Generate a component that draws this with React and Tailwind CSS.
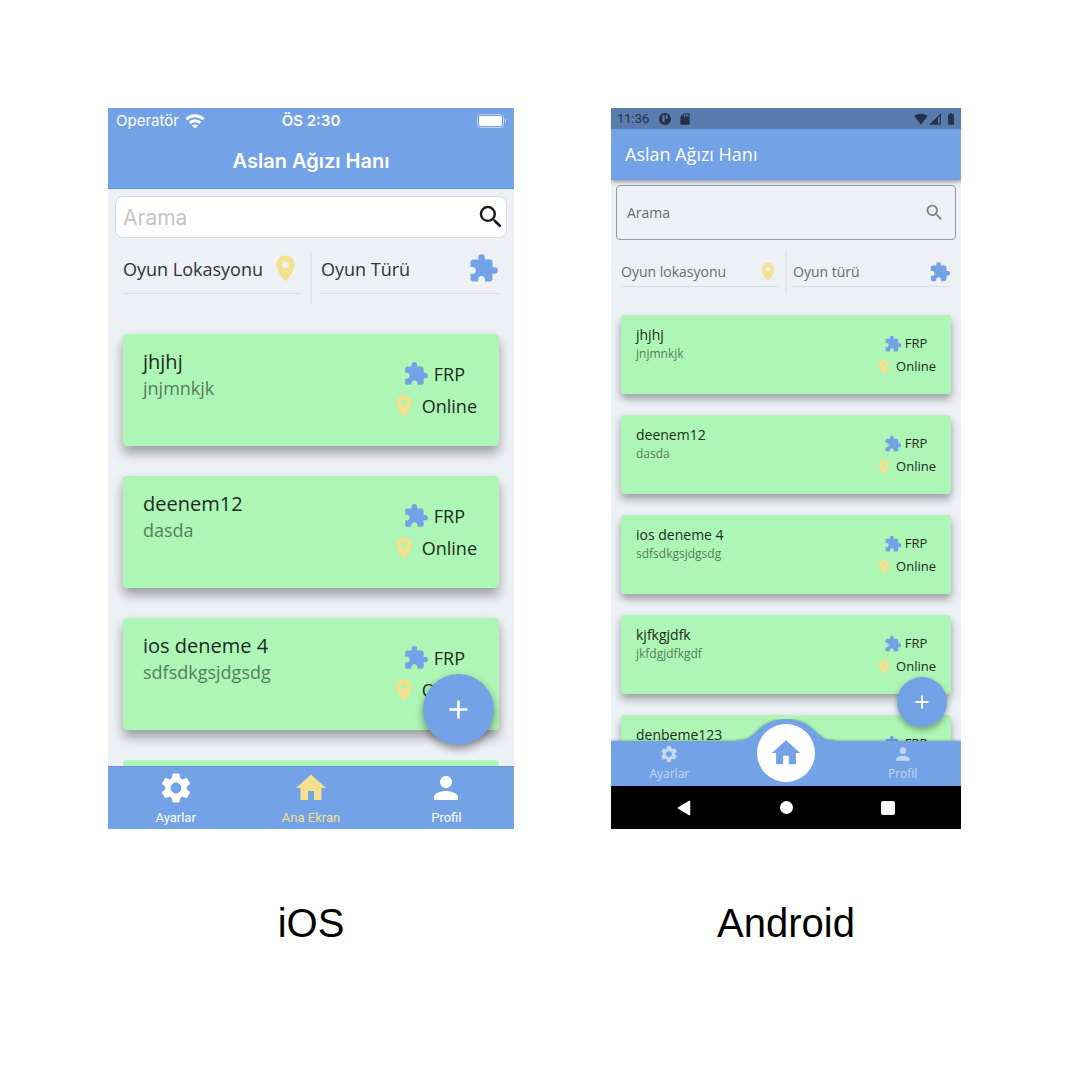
import React from "react";
import {
  MdAdd,
  MdBatteryFull,
  MdExtension,
  MdHome,
  MdNetworkCell,
  MdPerson,
  MdPlace,
  MdSdCard,
  MdSearch,
  MdSettings,
  MdSignalWifi4Bar,
} from "react-icons/md";

const games = [
  { title: "jhjhj", note: "jnjmnkjk" },
  { title: "deenem12", note: "dasda" },
  { title: "ios deneme 4", note: "sdfsdkgsjdgsdg" },
  { title: "kjfkgjdfk", note: "jkfdgjdfkgdf" },
  { title: "denbeme123", note: "dasda" },
];

function WifiArcs() {
  return (
    <svg viewBox="0 0 20 15" className="h-[15px] w-5" aria-hidden="true">
      <g fill="none" stroke="currentColor" strokeWidth="3">
        <path d="M1.4 5.2C6.2 0.7 13.8 0.7 18.6 5.2" />
        <path d="M4.7 8.8C7.7 6 12.3 6 15.3 8.8" />
      </g>
      <path d="M10 14.6L6.9 11.6C8.6 10.1 11.4 10.1 13.1 11.6Z" fill="currentColor" />
    </svg>
  );
}

function IosFilter({ label, children }) {
  return (
    <button type="button" className="flex h-[42px] flex-1 items-center justify-between border-b border-[#d9dde2] pb-2 text-left text-lg text-[#2f3336]">
      <span>{label}</span>
      {children}
    </button>
  );
}

function IosCard({ game }) {
  return (
    <li className="flex h-28 shrink-0 justify-between rounded bg-[#adf6b5] pr-[22px] pl-5 pt-3.5 shadow-[0_7px_12px_rgba(0,0,0,0.35)]">
      <div>
        <h3 className="text-xl leading-7 text-[#1c2b1e]">{game.title}</h3>
        <p className="text-lg leading-6 text-[#587d5c]">{game.note}</p>
      </div>
      <div className="flex flex-col items-center pt-2.5 text-lg leading-8 text-[#1c2b1e]">
        <span className="flex items-center gap-[5px]">
          <MdExtension className="size-[26px] text-[#74a2e7]" />
          FRP
        </span>
        <span className="flex items-center gap-[5px]">
          <MdPlace className="size-[26px] text-[#f5e08e]" />
          Online
        </span>
      </div>
    </li>
  );
}

function IosTab({ icon: Icon, label, active }) {
  return (
    <button type="button" aria-pressed={!!active} className={active ? "flex flex-1 flex-col items-center text-[#f5e08e]" : "flex flex-1 flex-col items-center text-white"}>
      <Icon className="mt-[3px] size-9" />
      <span className="mt-1 text-[13px] leading-4">{label}</span>
    </button>
  );
}

function IosPhone() {
  return (
    <section aria-label="iOS" className="relative flex aspect-[406/721] flex-col overflow-hidden bg-[#edf0f5] font-['Open_Sans',sans-serif]">
      <header className="shrink-0 border-b border-[#6691d8] bg-[#74a2e7] font-['Inter',sans-serif] text-white [font-optical-sizing:none]">
        <div className="grid h-[26px] grid-cols-3 items-center pr-2 pl-2 text-[15px]">
          <span className="flex items-center gap-1.5">
            Operatör
            <WifiArcs />
          </span>
          <span className="text-center font-semibold">ÖS 2:30</span>
          <span className="flex items-center justify-end gap-px">
            <span className="h-3.5 w-[27px] rounded border border-white/50 p-px">
              <span className="block h-full rounded-xs bg-white" />
            </span>
            <span className="h-1 w-px bg-white/50" />
          </span>
        </div>
        <h1 className="text-center text-xl leading-[54px] font-semibold">Aslan Ağızı Hanı</h1>
      </header>

      <div className="mx-[7px] mt-[7px] flex h-[42px] shrink-0 items-center rounded-lg border border-[#d6d9dd] bg-white pl-[7px]">
        <input type="search" aria-label="Arama" placeholder="Arama" className="h-8 min-w-0 flex-1 bg-transparent font-['Inter',sans-serif] text-[21px] text-black outline-none placeholder:text-[#c4c4c6]" />
        <MdSearch className="size-[30px] text-[#1b1b1b]" />
      </div>

      <div className="mt-3.5 flex h-[52px] shrink-0 px-[15px]">
        <IosFilter label="Oyun Lokasyonu">
          <MdPlace className="size-[31px] text-[#f5e08e]" />
        </IosFilter>
        <div className="mx-[9px] w-0.5 bg-[#e1e4e9]" />
        <IosFilter label="Oyun Türü">
          <MdExtension className="size-[31px] text-[#74a2e7]" />
        </IosFilter>
      </div>

      <ul className="flex min-h-0 flex-1 flex-col gap-[30px] overflow-hidden px-[15px] pt-[30px]">
        {games.slice(0, 3).map((g) => (
          <IosCard key={g.title} game={g} />
        ))}
        <li aria-hidden="true" className="h-28 shrink-0 rounded bg-[#adf6b5]" />
      </ul>

      <button type="button" aria-label="Ekle" className="absolute right-5 bottom-[84px] flex size-[71px] items-center justify-center rounded-full bg-[#74a2e7] text-white shadow-[0_4px_8px_rgba(0,0,0,0.4)]">
        <MdAdd className="size-[31px]" />
      </button>

      <nav className="flex h-[63px] shrink-0 border-t border-[#6691d8] bg-[#74a2e7] font-['Roboto',sans-serif]">
        <IosTab icon={MdSettings} label="Ayarlar" />
        <IosTab icon={MdHome} label="Ana Ekran" active />
        <IosTab icon={MdPerson} label="Profil" />
      </nav>
    </section>
  );
}

function AndroidFilter({ label, children }) {
  return (
    <button type="button" className="flex h-[37px] flex-1 items-center justify-between border-b border-[#dbdfe3] pt-2 text-left text-sm text-[#6a6d70]">
      <span>{label}</span>
      {children}
    </button>
  );
}

function AndroidCard({ game }) {
  return (
    <li className="flex h-[79px] shrink-0 justify-between rounded-sm bg-[#adf6b5] pt-2.5 pr-[15px] pl-[15px] shadow-[0_5px_8px_rgba(0,0,0,0.35)]">
      <div>
        <h3 className="text-sm leading-5 text-[#1c2b1e]">{game.title}</h3>
        <p className="text-xs leading-[18px] text-[#587d5c]">{game.note}</p>
      </div>
      <div className="flex flex-col items-center pt-[7px] text-[13px] leading-[23px] text-[#1c2b1e]">
        <span className="flex items-center gap-[3px]">
          <MdExtension className="size-[18px] text-[#74a2e7]" />
          FRP
        </span>
        <span className="flex items-center gap-[3px]">
          <MdPlace className="size-[18px] text-[#f5e08e]" />
          Online
        </span>
      </div>
    </li>
  );
}

function AndroidTab({ icon: Icon, label }) {
  return (
    <button type="button" className="flex flex-1 flex-col items-center text-[#c3d7f6]">
      <Icon className="mt-[3px] size-5" />
      <span className="text-xs leading-5">{label}</span>
    </button>
  );
}

function AndroidPhone() {
  return (
    <section aria-label="Android" className="relative flex aspect-[350/721] flex-col overflow-hidden bg-[#edf0f5] font-['Open_Sans',sans-serif]">
      <header className="z-10 shrink-0 bg-[#74a2e7] pb-px text-white shadow-[0_2px_4px_rgba(0,0,0,0.35)]">
        <div className="flex h-[21px] items-center bg-[#5a7bae] pr-[3px] pl-1.5 font-['Roboto',sans-serif] text-[13px] text-[#233349]">
          <span>11:36</span>
          <svg viewBox="0 0 12 12" className="ml-2.5 size-3" aria-hidden="true">
            <circle cx="6" cy="6" r="6" fill="currentColor" />
            <path d="M3.4 2.4H5.6V9.4A4 4 0 0 1 3.4 8ZM6.6 2.4H8.6V5.8H6.6Z" fill="#5a7bae" />
          </svg>
          <MdSdCard className="ml-[7px] size-3.5" />
          <MdSignalWifi4Bar className="ml-auto size-3.5" />
          <MdNetworkCell className="size-3.5" />
          <MdBatteryFull className="ml-0.5 size-3.5" />
        </div>
        <h1 className="pl-3.5 text-lg leading-[50px]">Aslan Ağızı Hanı</h1>
      </header>

      <div className="mx-[5px] mt-[5px] flex h-[55px] shrink-0 items-center rounded border border-[#96999d] px-2.5">
        <input type="search" aria-label="Arama" placeholder="Arama" className="h-7 min-w-0 flex-1 bg-transparent text-sm text-black outline-none placeholder:text-[#696c6f]" />
        <MdSearch className="size-[21px] text-[#7d8084]" />
      </div>

      <div className="mt-2.5 flex h-11 shrink-0 px-2.5">
        <AndroidFilter label="Oyun lokasyonu">
          <MdPlace className="size-[22px] text-[#f5e08e]" />
        </AndroidFilter>
        <div className="mx-1.5 w-0.5 bg-[#e3e6ea]" />
        <AndroidFilter label="Oyun türü">
          <MdExtension className="size-[22px] text-[#74a2e7]" />
        </AndroidFilter>
      </div>

      <ul className="flex min-h-0 flex-1 flex-col gap-[21px] overflow-hidden px-2.5 pt-[21px]">
        {games.map((g) => (
          <AndroidCard key={g.title} game={g} />
        ))}
      </ul>

      <button type="button" aria-label="Ekle" className="absolute right-3.5 bottom-[102px] flex size-[50px] items-center justify-center rounded-full bg-[#74a2e7] text-white shadow-[0_3px_6px_rgba(0,0,0,0.35)]">
        <MdAdd className="size-[22px]" />
      </button>

      <nav className="relative flex h-[45px] shrink-0 bg-[#74a2e7] shadow-[0_-1px_2px_rgba(0,0,0,0.2)]">
        <svg viewBox="0 0 100 24" className="absolute -top-[22px] left-1/2 h-6 w-[100px] -translate-x-1/2" aria-hidden="true">
          <path d="M0 22C10 22 15 18 21 12C27 6 36 0 50 0C64 0 73 6 79 12C85 18 90 22 100 22V24H0Z" fill="#74a2e7" className="drop-shadow-[0_-1px_1px_rgba(0,0,0,0.2)]" />
        </svg>
        <AndroidTab icon={MdSettings} label="Ayarlar" />
        <div className="relative flex flex-1 justify-center">
          <button type="button" aria-label="Ana Ekran" className="absolute -top-[17px] flex size-[58px] items-center justify-center rounded-full bg-white text-[#74a2e7]">
            <MdHome className="size-[34px]" />
          </button>
        </div>
        <AndroidTab icon={MdPerson} label="Profil" />
      </nav>

      <div className="z-10 flex h-[43px] shrink-0 items-center justify-around bg-black px-[22px]">
        <button type="button" aria-label="Geri" className="flex size-8 items-center justify-center">
          <svg viewBox="0 0 14 16" className="h-4 w-3.5" aria-hidden="true">
            <path d="M12.5 1.5V14.5L1.5 8Z" fill="#fff" stroke="#fff" strokeWidth="1.5" strokeLinejoin="round" />
          </svg>
        </button>
        <button type="button" aria-label="Ana sayfa" className="flex size-8 items-center justify-center">
          <span className="size-[13px] rounded-full bg-white" />
        </button>
        <button type="button" aria-label="Son uygulamalar" className="flex size-8 items-center justify-center">
          <span className="size-3.5 rounded-xs bg-white" />
        </button>
      </div>
    </section>
  );
}

export default function App() {
  return (
    <main className="min-h-screen bg-white pt-[108px] pr-[119px] pl-[108px]">
      <div className="grid grid-cols-[406fr_350fr] items-start gap-x-[97px]">
        <figure>
          <IosPhone />
          <figcaption className="mt-16 text-center font-['Liberation_Sans',sans-serif] text-[40px] leading-[60px] text-black">iOS</figcaption>
        </figure>
        <figure>
          <AndroidPhone />
          <figcaption className="mt-16 text-center font-['Liberation_Sans',sans-serif] text-[40px] leading-[60px] text-black">Android</figcaption>
        </figure>
      </div>
    </main>
  );
}
